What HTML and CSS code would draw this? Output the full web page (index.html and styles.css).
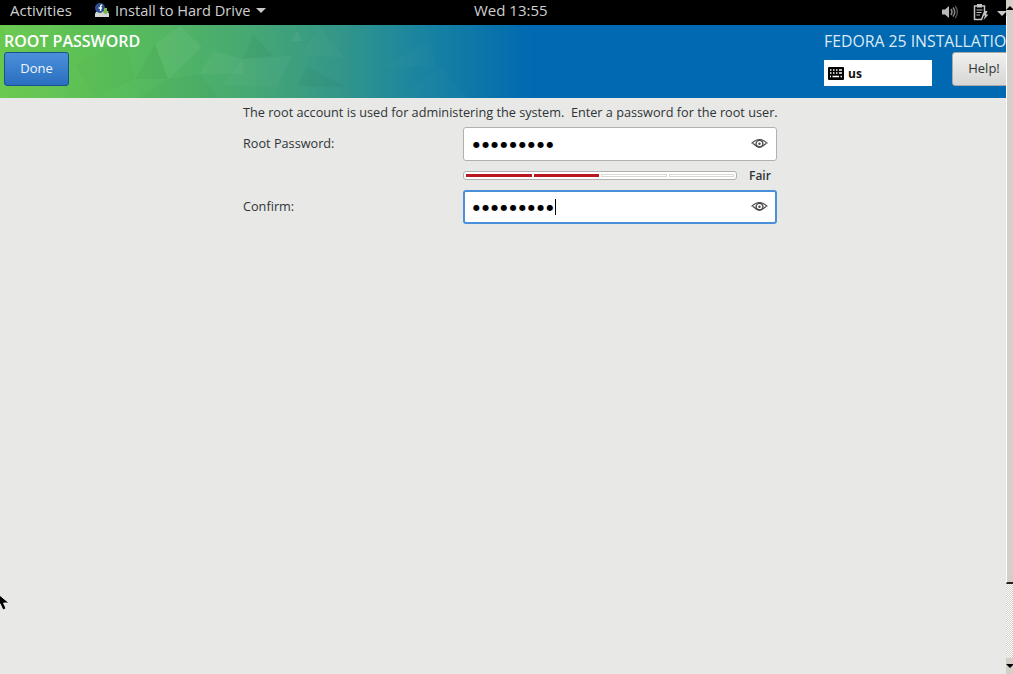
FILE: index.html
```html
<!DOCTYPE html>
<html lang="en">
<head>
<meta charset="utf-8">
<title>Root Password</title>
<link rel="stylesheet" href="styles.css">
</head>
<body>
<div class="screen">
  <div class="topbar">
    <span class="activities">Activities</span>
    <span class="appmenu">
      <svg class="appicon" width="16" height="16" viewBox="0 0 16 16"><path d="M1 11.5 L3 9 H13 L15 11.5 V15 H1 Z" fill="#d4d7cf"/><circle cx="6" cy="6" r="5" fill="#2c4f94"/><path d="M6.6 9 V4.6 Q6.6 3 8.2 3 M4.6 6 H8" fill="none" stroke="#fff" stroke-width="1.3"/><path d="M10 6 H13 V9 H15 L11.5 12.5 L8 9 H10 Z" fill="#7cb552"/></svg>
      <span class="appname">Install to Hard Drive</span>
      <span class="caret"></span>
    </span>
    <span class="clock">Wed 13:55</span>
    <span class="status">
      <svg width="18" height="16" viewBox="0 0 18 16"><path d="M1 5.5 H4 L8 2 V14 L4 10.5 H1 Z" fill="#b8b8b8"/><path d="M10 5 Q12 8 10 11 M12 3.5 Q15.5 8 12 12.5" fill="none" stroke="#8a8a8a" stroke-width="1.5"/><path d="M14.2 2 Q18.6 8 14.2 14" fill="none" stroke="#555" stroke-width="1.3"/></svg>
      <svg class="clipboard" width="16" height="18" viewBox="0 0 16 18"><path d="M1.5 3 H11.5 V9 L8.5 16.5 H1.5 Z" fill="none" stroke="#c4c4c4" stroke-width="1.5"/><path d="M4 1 H9 V4.5 H4 Z" fill="#c4c4c4"/><path d="M3.5 7 H9.5 M3.5 9.5 H8.5 M3.5 12 H7" stroke="#c4c4c4" stroke-width="1"/><path d="M12 8 L9.5 12.5 H12 L10.5 17 L15.5 11.5 H13 L14.5 8 Z" fill="#c4c4c4"/></svg>
      <span class="caret"></span>
    </span>
  </div>
  <div class="main">
    <div class="header">
      <div class="header-art">
        <svg class="facets" width="540" height="73" viewBox="0 0 540 73">
          <path d="M0 1 L60 0 L22 30 Z" fill="#fff" opacity=".03"/>
          <path d="M0 55 L45 30 L70 73 L0 73 Z" fill="#fff" opacity=".02"/>
          <path d="M75 40 L125 14 L135 54 L95 73 Z" fill="#000" opacity=".015"/>
          <path d="M155 19 L180 1 L202 22 L168 54 Z" fill="#fff" opacity=".05"/>
          <path d="M155 19 L135 54 L168 54 Z" fill="#000" opacity=".03"/>
          <path d="M213 26 L200 49 L243 49 L243 34 Z" fill="#fff" opacity=".04"/>
          <path d="M168 54 L200 49 L220 73 L137 73 Z" fill="#000" opacity=".02"/>
          <path d="M243 34 L273 31 L253 9 Z" fill="#000" opacity=".03"/>
          <path d="M243 34 L292 31 L277 62 L222 60 Z" fill="#fff" opacity=".03"/>
          <path d="M292 16 L302 16 L297 6 Z" fill="#fff" opacity=".06"/>
          <path d="M297 61 L307 42 L347 62 Z" fill="#000" opacity=".03"/>
          <path d="M320 3 L345 33 L300 30 Z" fill="#fff" opacity=".025"/>
          <path d="M383 42 L427 17 L437 42 Z" fill="#fff" opacity=".02"/>
          <path d="M413 62 L440 42 L467 73 L405 73 Z" fill="#fff" opacity=".015"/>
        </svg>
      </div>
      <div class="header-left">
        <div class="spoke-title">ROOT PASSWORD</div>
        <button class="btn-done">Done</button>
      </div>
      <div class="header-right">
        <div class="product">FEDORA 25 INSTALLATION</div>
        <div class="header-controls">
          <div class="layout">
            <svg width="16" height="13" viewBox="0 0 16 13"><rect width="16" height="13" rx="1" fill="#000"/><path d="M2 3 H3.5 M5 3 H6.5 M8 3 H9.5 M11 3 H14 M2 6 H3.5 M5 6 H6.5 M8 6 H9.5 M11 6 H14 M2 9.5 H3 M4.5 9.5 H11 M12.5 9.5 H14" stroke="#fff" stroke-width="1.4"/></svg>
            <span>us</span>
          </div>
          <button class="btn-help">Help!</button>
        </div>
      </div>
    </div>
    <div class="content">
      <div class="intro">The root account is used for administering the system.&nbsp; Enter a password for the root user.</div>
      <div class="form">
        <label class="field-label">Root Password:</label>
        <div class="entry">
          <span class="dots">●●●●●●●●●</span>
          <svg class="eye" width="17" height="12" viewBox="0 0 17 12"><path d="M0.6 5.5 Q8.5 -2.5 16.4 5.5 M2 5.5 Q8.5 12 15 5.5" fill="none" stroke="#4a4a4a" stroke-width="1.1"/><circle cx="8.5" cy="5.8" r="3.4" fill="none" stroke="#4a4a4a" stroke-width="1.4"/><circle cx="8.5" cy="5.8" r="1.2" fill="#4a4a4a"/></svg>
        </div>
        <div class="strength-row">
          <div class="meter">
            <span class="seg on"></span><span class="seg on"></span><span class="seg"></span><span class="seg"></span>
          </div>
          <span class="strength">Fair</span>
        </div>
        <label class="field-label">Confirm:</label>
        <div class="entry focused">
          <span class="dots">●●●●●●●●●</span><span class="cursor"></span>
          <svg class="eye" width="17" height="12" viewBox="0 0 17 12"><path d="M0.6 5.5 Q8.5 -2.5 16.4 5.5 M2 5.5 Q8.5 12 15 5.5" fill="none" stroke="#4a4a4a" stroke-width="1.1"/><circle cx="8.5" cy="5.8" r="3.4" fill="none" stroke="#4a4a4a" stroke-width="1.4"/><circle cx="8.5" cy="5.8" r="1.2" fill="#4a4a4a"/></svg>
        </div>
      </div>
    </div>
    <svg class="pointer" width="10" height="18" viewBox="0 0 10 18"><path d="M-3 0 V13 L0 10.5 L3 17 L6 15.5 L3.5 10 H9 Z" fill="#000" stroke="#fff" stroke-width=".8"/></svg>
  </div>
  <div class="scrollbar">
    <span class="sb-arrow up"></span>
    <span class="sb-thumb"></span>
    <span class="sb-track"></span>
    <span class="sb-arrow down"></span>
  </div>
</div>
</body>
</html>
```
FILE: styles.css
```css
* { box-sizing: border-box; }
html, body { margin: 0; height: 100%; overflow: hidden; }
body { font-family: "Open Sans", "Noto Sans", sans-serif; font-size: 12.7px; color: #2e3436; background: #e8e8e7; }
.screen { position: relative; width: 1013px; height: 674px; display: flex; flex-direction: column; overflow: hidden; }
.topbar { position: relative; height: 25px; flex: none; background: #000; color: #cfcfcf; display: flex; align-items: center; padding: 0 0 5px 10px; font-size: 15px; }
.activities { width: 84px; }
.appmenu { display: flex; align-items: center; gap: 5px; }
.appname { font-size: 14.6px; }
.caret { display: inline-block; width: 0; height: 0; border-left: 5px solid transparent; border-right: 5px solid transparent; border-top: 5px solid #c8c8c8; }
.clock { position: absolute; left: 474px; top: 0; line-height: 20px; }
.status { position: absolute; left: 941px; top: 3px; display: flex; align-items: center; gap: 14px; }
.status .caret { margin-left: -6px; margin-top: 2px; }
.main { position: relative; flex: 1; display: flex; flex-direction: column; }
.header { position: relative; height: 73px; flex: none; background: #0069b1; overflow: hidden; color: #fff; display: flex; justify-content: space-between; }
.header-art { position: absolute; left: 0; top: 0; width: 540px; height: 73px; background: linear-gradient(90deg, #68c84c 0, #57bc5c 130px, #46a873 250px, #339689 340px, #1a84a0 420px, #0069b1 533px); }
.facets { display: block; }
.header-left { position: relative; padding: 7px 0 0 4px; }
.spoke-title { font-size: 16px; font-weight: 600; line-height: 18px; }
.btn-done { display: block; margin-top: 2px; width: 65px; height: 34px; border: 1px solid #1c4f8f; border-radius: 3px; background: linear-gradient(#4a90d9, #2a6fc0); color: #f2f6fb; font: inherit; font-size: 13px; padding: 0 0 2px; }
.header-right { position: relative; width: 189px; padding-top: 7px; flex: none; white-space: nowrap; }
.product { font-size: 15.8px; line-height: 18px; color: #dbeaf6; }
.header-controls { display: flex; margin-top: 2px; align-items: flex-start; gap: 20px; }
.layout { margin-top: 8px; width: 108px; height: 26px; flex: none; background: #fff; color: #111; font-weight: 700; font-size: 12px; display: flex; align-items: center; gap: 4px; padding-left: 4px; }
.btn-help { width: 70px; height: 34px; flex: none; border: 1px solid #a8a8a8; border-radius: 3px; background: linear-gradient(#f0f0ef, #d6d6d4); color: #2e3436; font: inherit; font-size: 13px; padding: 0 6px 3px 0; }
.content { width: 534px; margin-left: 243px; padding-top: 5px; }
.intro { line-height: 18px; white-space: nowrap; }
.form { display: grid; grid-template-columns: 220px 314px; row-gap: 6px; margin-top: 6px; align-items: center; }
.field-label { padding-bottom: 2px; }
.entry { position: relative; height: 34px; background: #fff; border: 1px solid #b0b0ae; border-radius: 3px; display: flex; align-items: center; padding-left: 9px; }
.entry.focused { border: 2px solid #4a90d9; padding-left: 8px; }
.dots { font-family: "DejaVu Sans", sans-serif; font-size: 8px; letter-spacing: 2.2px; color: #000; }
.cursor { width: 1px; height: 16px; background: #000; margin-left: -1px; }
.eye { margin-left: auto; margin-right: 8px; }
.focused .eye { margin-right: 7px; }
.strength-row { grid-column: 2; display: flex; align-items: center; height: 19px; margin: -1px 0; }
.meter { width: 274px; height: 9px; border: 1px solid #b0b0ae; border-radius: 3px; background: #fff; display: flex; gap: 2px; padding: 2px; }
.seg { flex: 1; background: #fff; box-shadow: inset 0 0 0 1px #d8d8d6; }
.seg.on { background: #b8191d; box-shadow: none; }
.strength { margin-left: 12px; font-size: 12px; font-weight: 600; }
.pointer { position: absolute; left: 0; top: 568px; }
.scrollbar { position: absolute; right: 0; top: 0; bottom: 0; width: 7px; display: flex; flex-direction: column; }
.sb-arrow { height: 16px; background: #d4d0c8; flex: none; position: relative; }
.sb-thumb { height: 568px; flex: none; background: #d4d0c8; border-left: 1px solid #fff; border-bottom: 2px solid #222; }
.sb-track { flex: 1; background: repeating-conic-gradient(#d4d0c8 0 25%, #fff 0 50%) 0 0 / 2px 2px; }
.sb-arrow.up::after { content: ""; position: absolute; left: 0; top: 6px; border-left: 4px solid transparent; border-right: 4px solid transparent; border-bottom: 4px solid #000; }
.sb-arrow.down::after { content: ""; position: absolute; left: 0; top: 6px; border-left: 4px solid transparent; border-right: 4px solid transparent; border-top: 4px solid #000; }
```
